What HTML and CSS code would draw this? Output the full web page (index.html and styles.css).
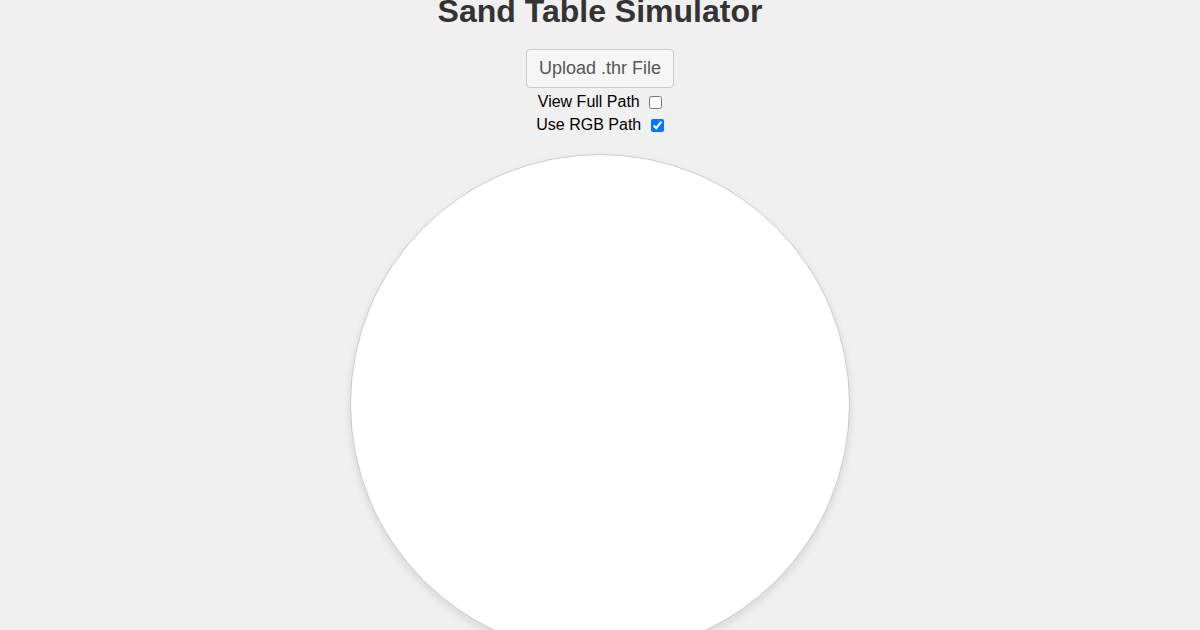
FILE: index.html
```html
<!DOCTYPE html>
<html>
<head>
<meta charset="utf-8">
<title>Sand Table Simulator</title>
<link rel="stylesheet" href="styles.css">
</head>
<body>
<main class="app">
  <h1 class="title">Sand Table Simulator</h1>
  <button class="upload">Upload .thr File</button>
  <div class="option"><label>View Full Path <input type="checkbox"></label></div>
  <div class="option"><label>Use RGB Path <input type="checkbox" checked></label></div>
  <div class="table"></div>
</main>
</body>
</html>
```

FILE: styles.css
```css
html, body {
  margin: 0;
  padding: 0;
  background: #f0f0f0;
  font-family: "Liberation Sans", Arial, sans-serif;
  color: #000;
  overflow: hidden;
}
.app {
  display: flex;
  flex-direction: column;
  align-items: center;
}
.title {
  font-size: 32px;
  font-weight: bold;
  color: #333;
  margin: -7px 0 20px;
  line-height: 36px;
}
.upload {
  font-family: "Liberation Sans", Arial, sans-serif;
  font-size: 18px;
  color: #555;
  background: #f6f6f6;
  border: 1px solid #ccc;
  border-radius: 4px;
  padding: 8px 12px;
  line-height: 21px;
  margin-bottom: 2px;
}
.option {
  font-size: 16px;
  height: 23.3px;
  display: flex;
  align-items: center;
  padding-left: 3px;
}
.option input {
  margin: 0 3px 0 5px;
  width: 13px;
  height: 13px;
  vertical-align: middle;
}
.table {
  margin-top: 17px;
  width: 498px;
  height: 498px;
  border-radius: 50%;
  background: #fff;
  border: 1px solid #ccc;
  box-shadow: 0 4px 8px rgba(0,0,0,0.1);
}
```
